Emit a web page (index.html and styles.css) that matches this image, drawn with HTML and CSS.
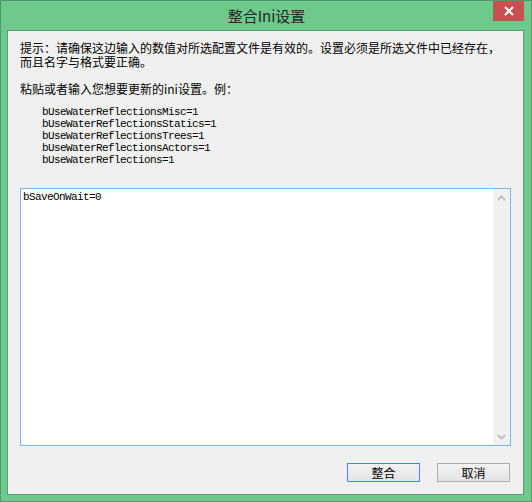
FILE: index.html
```html
<!DOCTYPE html>
<html lang="zh-CN">
<head>
<meta charset="utf-8">
<title>整合Ini设置</title>
<link rel="stylesheet" href="styles.css">
</head>
<body>
<div class="window">
  <div class="titlebar">
    <span class="spacer"></span>
    <span class="title">整合Ini设置</span>
    <span class="controls">
      <button class="close" aria-label="关闭">
        <svg width="10" height="10" viewBox="0 0 10 10"><path d="M1 1 L9 9 M9 1 L1 9" stroke="#fff" stroke-width="2" fill="none"/></svg>
      </button>
    </span>
  </div>
  <div class="client">
    <p class="hint">提示：请确保这边输入的数值对所选配置文件是有效的。设置必须是所选文件中已经存在，<br>而且名字与格式要正确。</p>
    <p class="prompt">粘贴或者输入您想要更新的ini设置。例：</p>
    <pre class="example">bUseWaterReflectionsMisc=1
bUseWaterReflectionsStatics=1
bUseWaterReflectionsTrees=1
bUseWaterReflectionsActors=1
bUseWaterReflections=1</pre>
    <div class="editor">
      <textarea class="input" spellcheck="false">bSaveOnWait=0</textarea>
      <div class="scrollbar">
        <span class="arrow">
          <svg width="9" height="6" viewBox="0 0 9 6"><path d="M1 5 L4.5 1.5 L8 5" stroke="#c2c2c2" stroke-width="2" fill="none"/></svg>
        </span>
        <span class="arrow">
          <svg width="9" height="6" viewBox="0 0 9 6"><path d="M1 1 L4.5 4.5 L8 1" stroke="#c2c2c2" stroke-width="2" fill="none"/></svg>
        </span>
      </div>
    </div>
    <div class="buttons">
      <button class="btn default">整合</button>
      <button class="btn">取消</button>
    </div>
  </div>
</div>
</body>
</html>
```

FILE: styles.css
```css
* { box-sizing: border-box; }
html, body { margin: 0; padding: 0; }
body {
  width: 532px;
  height: 502px;
  font-family: "Noto Sans CJK SC", "Noto Sans", sans-serif;
  font-size: 12px;
  color: #000;
}
.window {
  width: 532px;
  height: 502px;
  background: #6dc98c;
  border: 1px solid #53966a;
  display: flex;
  flex-direction: column;
}
.titlebar {
  height: 29px;
  display: grid;
  grid-template-columns: 1fr auto 1fr;
  align-items: start;
}
.title {
  font-size: 15px;
  line-height: 29px;
  color: #262626;
  padding-left: 1px;
}
.controls {
  display: flex;
  justify-content: flex-end;
  padding-right: 7px;
}
.close {
  width: 31px;
  height: 20px;
  border: 0;
  padding: 0;
  background: #c75050;
  display: flex;
  align-items: center;
  justify-content: center;
}
.client {
  flex: 1;
  margin: 0 7px 6px 6px;
  border: 1px solid #5a9c6f;
  background: #f0f0f0;
  padding: 10px 12px 12px 12px;
  display: flex;
  flex-direction: column;
}
.hint, .prompt {
  margin: 0;
  line-height: 14px;
}
.prompt { margin-top: 13px; }
.example {
  margin: 10px 0 0 22px;
  font-family: "Liberation Mono", monospace;
  font-size: 11px;
  letter-spacing: -0.6px;
  line-height: 12px;
  color: #000;
}
.editor {
  flex: 1;
  margin-top: 22px;
  border: 1px solid #7eb4ea;
  background: #fff;
  display: flex;
}
.input {
  flex: 1;
  border: 0;
  outline: none;
  resize: none;
  overflow: hidden;
  margin: 0;
  padding: 2px 2px;
  font-family: "Liberation Mono", monospace;
  font-size: 11px;
  letter-spacing: -0.6px;
  line-height: 12px;
  color: #000;
  background: #fff;
}
.scrollbar {
  width: 17px;
  background: #f0f0f0;
  display: flex;
  flex-direction: column;
  justify-content: space-between;
}
.arrow {
  height: 17px;
  display: flex;
  align-items: center;
  justify-content: center;
}
.buttons {
  margin-top: 17px;
  display: flex;
  justify-content: flex-end;
  gap: 17px;
  padding-right: 1px;
}
.btn {
  width: 73px;
  height: 19px;
  padding: 0;
  border: 1px solid #adadad;
  background: linear-gradient(#f2f2f2, #e4e4e4);
  font-family: "Noto Sans CJK SC", sans-serif;
  font-size: 12px;
  line-height: 16px;
  color: #000;
}
.btn.default { border-color: #3c8ee2; }
```
